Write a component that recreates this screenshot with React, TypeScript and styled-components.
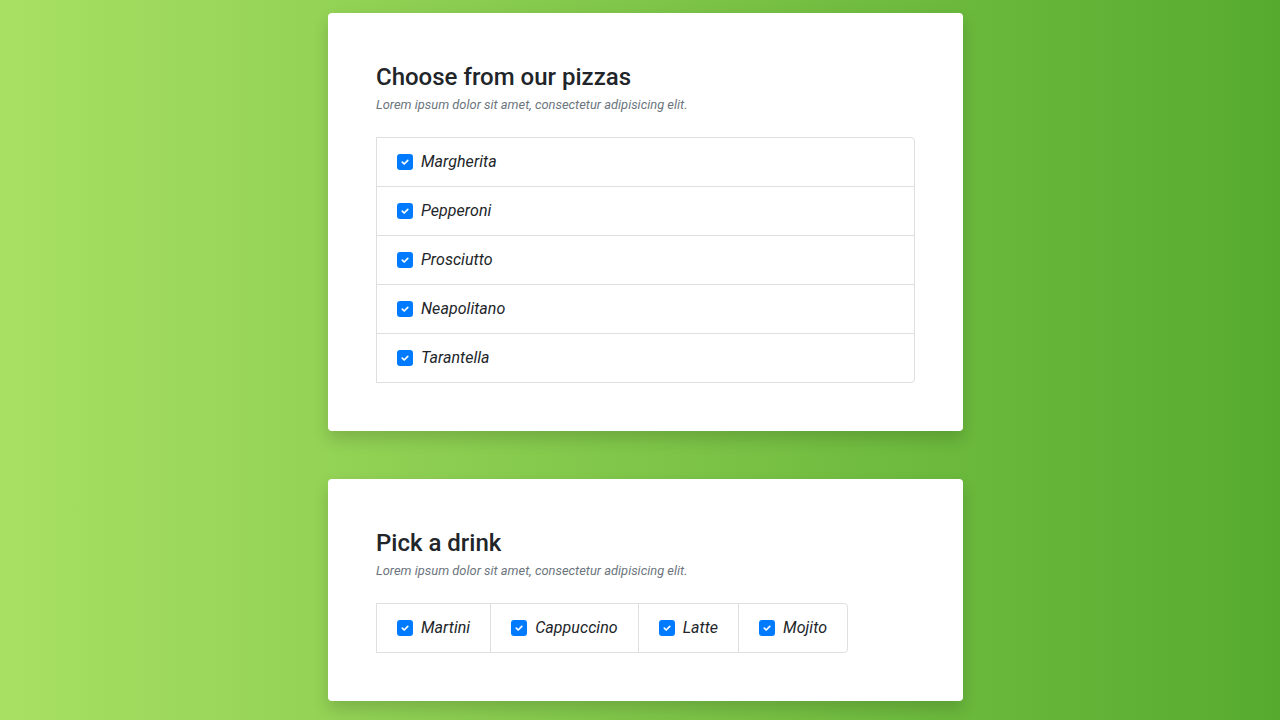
import React from "react";
import styled, { createGlobalStyle } from "styled-components";

const Global = createGlobalStyle`
  html, body { margin: 0; padding: 0; }
  body {
    font-family: Roboto, "Liberation Sans", sans-serif;
    background: linear-gradient(to right, #a8e063, #56ab2f);
    min-height: 100vh;
    color: #212529;
  }
`;

const Page = styled.div`
  display: flex;
  flex-direction: column;
  gap: 48px;
  padding: 13px 0 48px;
  margin-left: calc(50% - 312px);
  width: 635px;
`;

const Card = styled.section`
  background: #fff;
  border-radius: 4px;
  box-shadow: 0 8px 16px rgba(0, 0, 0, 0.15);
  padding: 50px 48px 48px;
`;

const Title = styled.h2`
  margin: 0;
  font-size: 24px;
  font-weight: 500;
  line-height: 1.2;
  color: #212529;
`;

const Subtitle = styled.p`
  margin: 3px 0 23px;
  font-size: 12.9px;
  font-style: italic;
  line-height: 19px;
  color: #6c757d;
`;

const List = styled.ul<{ $horizontal?: boolean }>`
  list-style: none;
  margin: 0;
  padding: 0;
  display: flex;
  flex-direction: ${(p) => (p.$horizontal ? "row" : "column")};
  width: ${(p) => (p.$horizontal ? "fit-content" : "auto")};
  border: 1px solid #dfdfdf;
  border-radius: 0 4px 4px 0;
`;

const Item = styled.li<{ $horizontal?: boolean }>`
  display: flex;
  align-items: center;
  gap: 8px;
  padding: 12px 20px;
  font-size: 16px;
  line-height: 24px;
  font-style: italic;
  letter-spacing: 0.05px;
  color: #212529;
  &:not(:first-child) {
    ${(p) => (p.$horizontal ? "border-left: 1px solid #dfdfdf;" : "border-top: 1px solid #dfdfdf;")}
  }
`;

const Box = styled.span`
  width: 16px;
  height: 16px;
  border-radius: 3px;
  background: #007bff;
  display: inline-flex;
  align-items: center;
  justify-content: center;
  flex-shrink: 0;
`;

const Check = () => (
  <Box>
    <svg width="10" height="10" viewBox="0 0 10 10">
      <path d="M2.3 5.2 L4.2 7 L7.8 3.3" fill="none" stroke="#fff" strokeWidth="1.7" strokeLinecap="round" strokeLinejoin="round" />
    </svg>
  </Box>
);

const pizzas = ["Margherita", "Pepperoni", "Prosciutto", "Neapolitano", "Tarantella"];
const drinks = ["Martini", "Cappuccino", "Latte", "Mojito"];

export default function App() {
  return (
    <>
      <Global />
      <Page>
        <Card>
          <Title>Choose from our pizzas</Title>
          <Subtitle>Lorem ipsum dolor sit amet, consectetur adipisicing elit.</Subtitle>
          <List>
            {pizzas.map((p) => (
              <Item key={p}>
                <Check />
                {p}
              </Item>
            ))}
          </List>
        </Card>
        <Card>
          <Title>Pick a drink</Title>
          <Subtitle>Lorem ipsum dolor sit amet, consectetur adipisicing elit.</Subtitle>
          <List $horizontal>
            {drinks.map((d) => (
              <Item key={d} $horizontal>
                <Check />
                {d}
              </Item>
            ))}
          </List>
        </Card>
      </Page>
    </>
  );
}
